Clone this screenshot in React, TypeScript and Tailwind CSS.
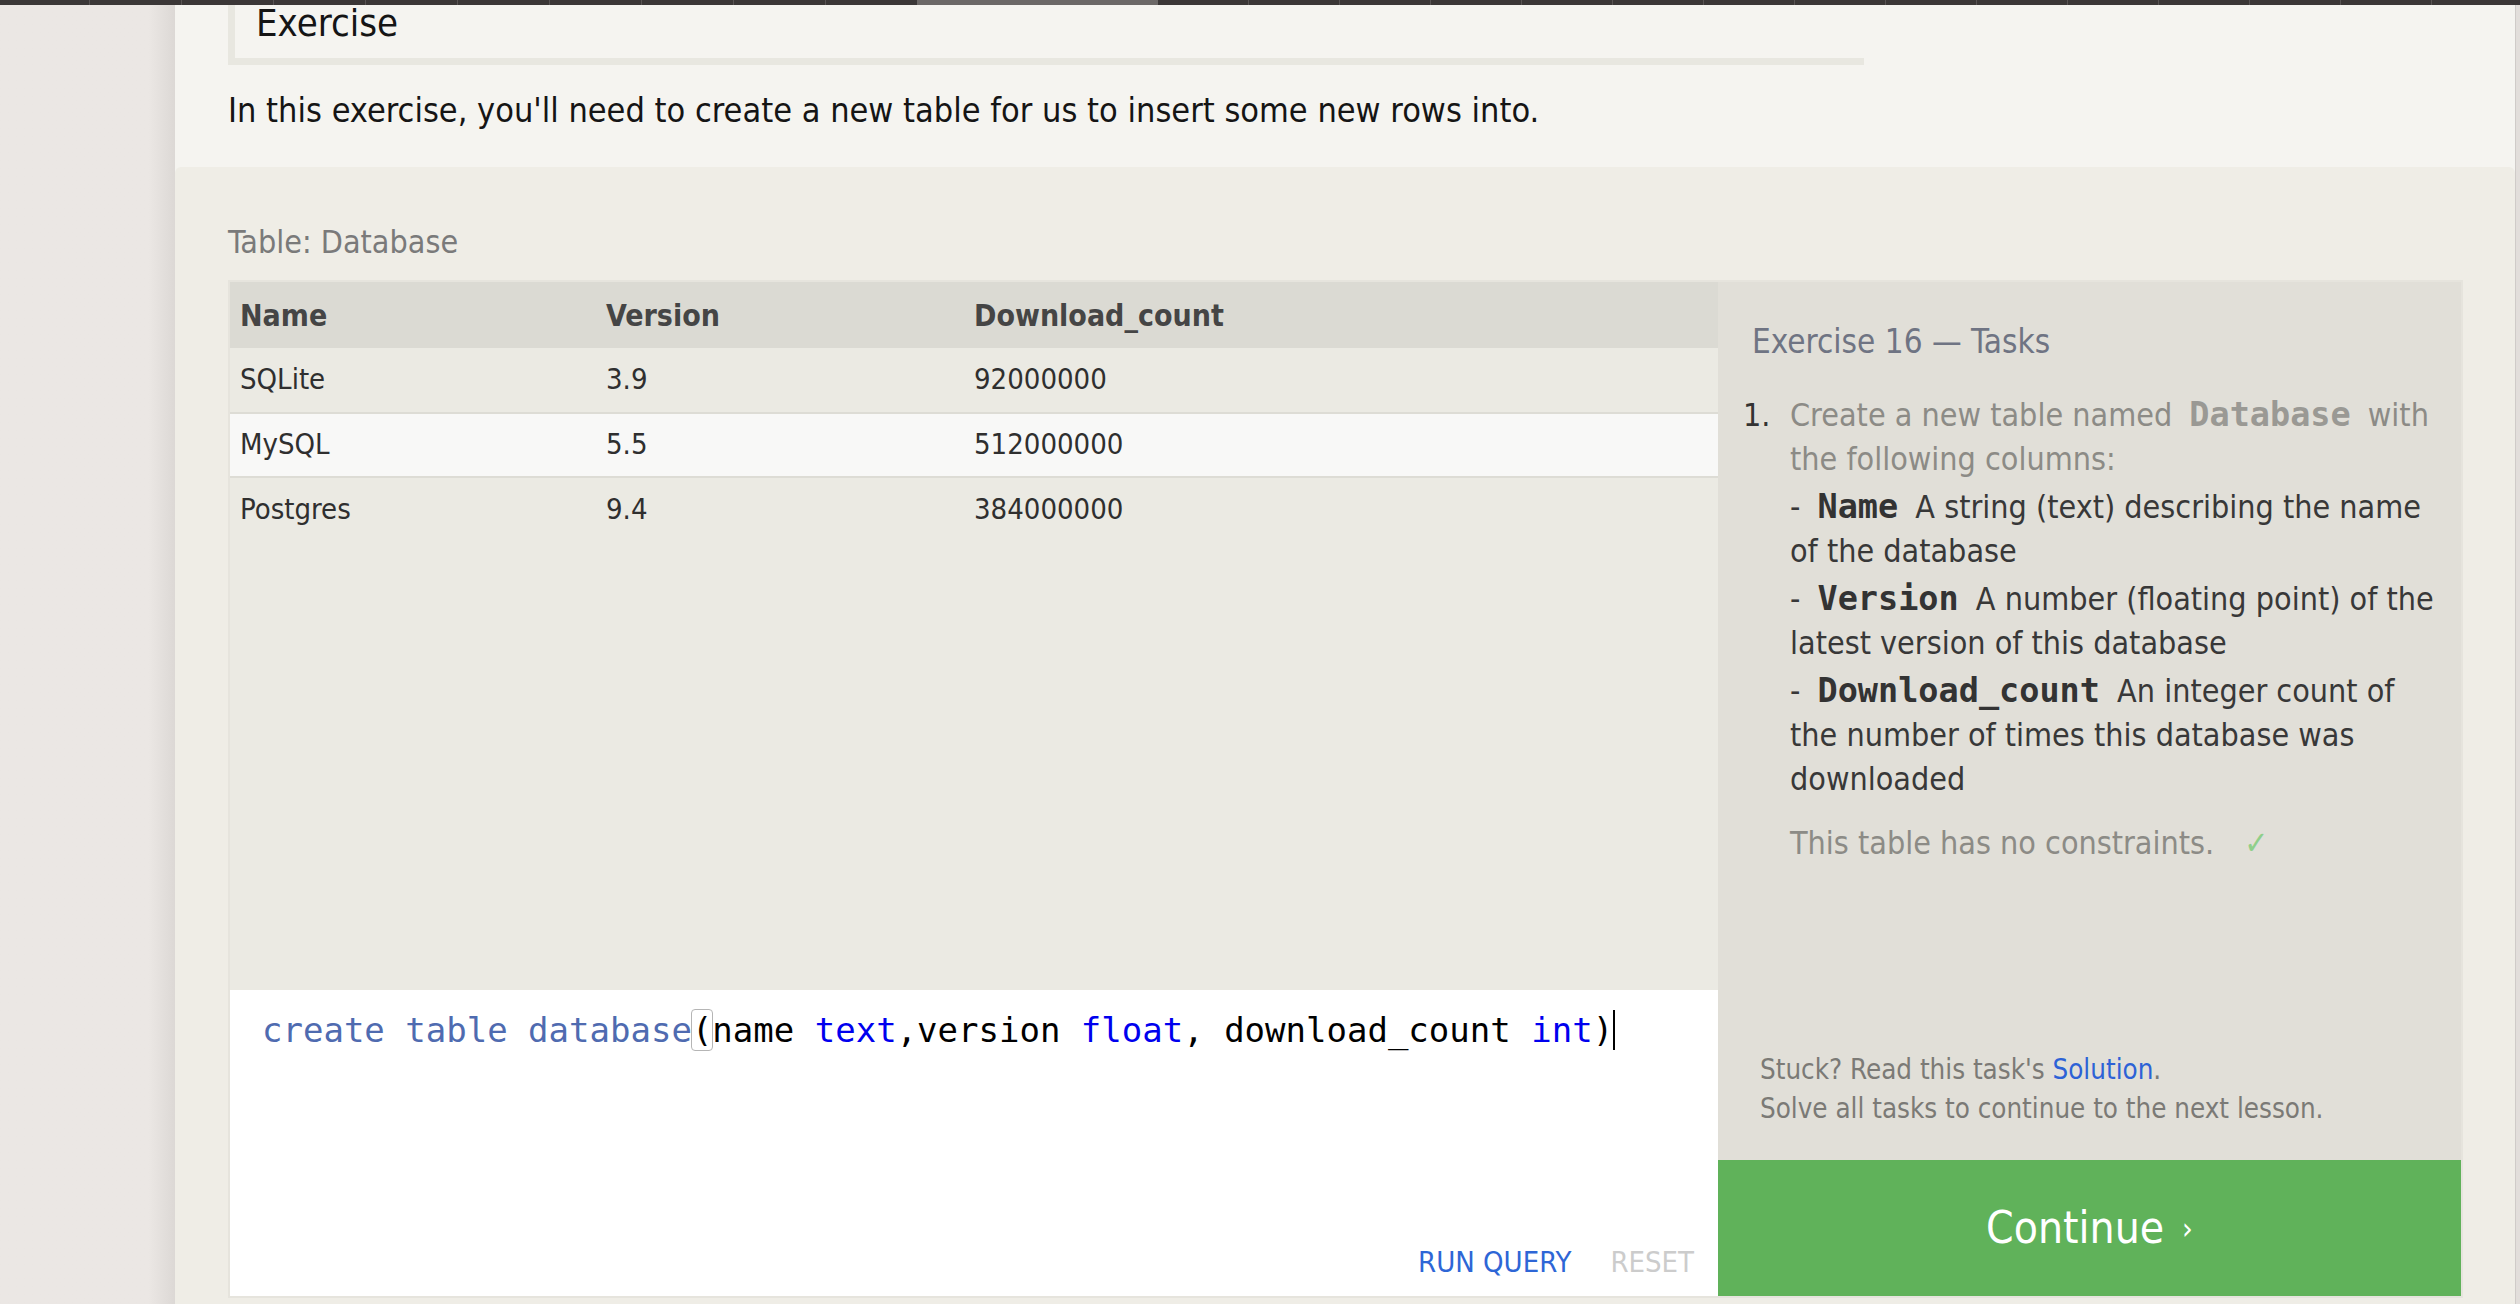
import React from 'react';

// sqlbolt-style exercise page (scrolled a bit down)

const sans = "font-['DejaVu_Sans_Condensed','Liberation_Sans',sans-serif]";
const mono = "font-['DejaVu_Sans_Mono','Liberation_Mono',monospace]";

const rows = [
  { name: 'SQLite', version: '3.9', count: '92000000', bg: 'bg-[#ebeae3]', h: 'h-[66px]' },
  { name: 'MySQL', version: '5.5', count: '512000000', bg: 'bg-[#f8f8f7]', h: 'h-[64px]' },
  { name: 'Postgres', version: '9.4', count: '384000000', bg: 'bg-[#ebeae3]', h: 'h-[64px]' },
];

const TabStrip = () => {
  const before = Array.from({ length: 9 });
  const after = Array.from({ length: 15 });
  return (
    <div className="h-[5px] shrink-0 flex bg-[#3b3737]">
      <div className="w-[89px] shrink-0" />
      {before.map((_, i) => (
        <div key={'b' + i} className="w-[92px] shrink-0 border-l border-[#595454]" />
      ))}
      <div className="w-[241px] shrink-0 bg-[#6c6867]" />
      {after.map((_, i) => (
        <div key={'a' + i} className="w-[91px] shrink-0 border-r border-[#595454]" />
      ))}
    </div>
  );
};

const Code = ({ children, muted }: { children: React.ReactNode; muted?: boolean }) => (
  <code
    className={`${mono} inline-block font-bold text-[33.5px] leading-[44px] pt-[4px] px-[8px] ${muted ? 'text-[#9a9994]' : 'text-[#333]'}`}
  >
    {children}
  </code>
);

const DataTable = () => (
  <div className="flex flex-col">
    <div className="h-[66px] grid grid-cols-[366px_368px_1fr] items-center bg-[#dbdad3] text-[30px] font-bold text-[#454545] pl-[10px]">
      <div>Name</div>
      <div>Version</div>
      <div>Download_count</div>
    </div>
    {rows.map((r, i) => (
      <div
        key={r.name}
        className={`${r.h} ${r.bg} grid grid-cols-[366px_368px_1fr] items-center pl-[10px] text-[29px] text-[#2f2f2f] ${i < 2 ? 'border-b-2 border-[#dddcd5]' : ''}`}
      >
        <div>{r.name}</div>
        <div>{r.version}</div>
        <div>{r.count}</div>
      </div>
    ))}
  </div>
);

const Editor = () => (
  <div className="h-[306px] shrink-0 bg-white flex flex-col">
    <div className={`${mono} text-[34px] leading-[40px] pl-[32px] pt-[20px] whitespace-pre text-black flex items-center`}>
      <span className="text-[#4f6bb0]">create table database</span>
      <span className="outline outline-1 outline-[#b5b5b5] rounded-[3px]">(</span>
      <span>name </span>
      <span className="text-[#0000ee]">text</span>
      <span>,version </span>
      <span className="text-[#0000ee]">float</span>
      <span>, download_count </span>
      <span className="text-[#0000ee]">int</span>
      <span>)</span>
      <span className="w-[2px] h-[40px] bg-black" />
    </div>
    <div className="mt-auto flex justify-end gap-[39px] pr-[24px] pb-[18px] text-[29px] leading-[32px]">
      <button className="text-[#2e66d6]">RUN QUERY</button>
      <button className="text-[#cccccc]">RESET</button>
    </div>
  </div>
);

const Tasks = () => (
  <div className="w-[743px] shrink-0 bg-[#e1dfd8] flex flex-col">
    <h2 className="pl-[34px] pt-[37px] text-[33px] leading-[46px] text-[#6f7483]">
      Exercise 16 — Tasks
    </h2>
    <ol className="mt-[24px] flex pl-[25px] text-[32px] leading-[44px]">
      <li className="flex items-baseline">
        <span className="w-[47px] shrink-0 text-[#333]">1.</span>
        <div className="w-[650px]">
          <span className="text-[#8c8b86]">
            Create a new table named <Code muted>Database</Code> with the following columns:
          </span>
          <br />
          <span className="text-[#383838]">
            - <Code>Name</Code> A string (text) describing the name of the database
            <br />- <Code>Version</Code> A number (floating point) of the latest version of this database
            <br />- <Code>Download_count</Code> An integer count of the number of times this database was downloaded
          </span>
          <p className="mt-[20px] text-[#8c8b86]">
            This table has no constraints.
            <span className="ml-[30px] text-[#8fcf8a]">✓</span>
          </p>
        </div>
      </li>
    </ol>
    <div className="mt-auto pl-[42px] pb-[32px] text-[27.5px] leading-[39px] text-[#7b7a76]">
      <p>
        Stuck? Read this task's <a className="text-[#2d62d6]">Solution</a>.
      </p>
      <p>Solve all tasks to continue to the next lesson.</p>
    </div>
    <button className="h-[136px] shrink-0 bg-[#60b25a] text-white text-[44px] flex items-center justify-center gap-[18px]">
      <span>Continue</span>
      <span className="text-[30px]">›</span>
    </button>
  </div>
);

export default function App() {
  return (
    <div className={`w-[2520px] h-[1304px] overflow-hidden flex flex-col bg-[#efede6] ${sans}`}>
      <TabStrip />
      <div className="flex flex-1 min-h-0">
        <aside className="w-[175px] shrink-0 bg-gradient-to-r from-[#ebe7e4] from-85% to-[#dcd8d5]" />
        <main className="w-[2340px] shrink-0 flex flex-col bg-[#f5f4f0]">
          <section className="h-[162px] shrink-0 pl-[53px]">
            <div className="w-[1636px] h-[60px] border-l-[7px] border-b-[7px] border-[#e8e7e0] pl-[21px]">
              <h1 className="text-[38px] leading-[36px] text-[#151515]">Exercise</h1>
            </div>
            <p className="mt-[22px] text-[34px] leading-[46px] text-[#151515]">
              In this exercise, you'll need to create a new table for us to insert some new rows into.
            </p>
          </section>
          <section className="flex-1 flex flex-col bg-[#efede6] rounded-t-[6px] pl-[53px] pr-[52px]">
            <div className="pt-[55px] text-[32px] leading-[40px] text-[#7a7a7a]">Table: Database</div>
            <div className="mt-[18px] h-[1018px] shrink-0 flex border-2 border-[#e6e4dd]">
              <div className="w-[1488px] shrink-0 flex flex-col">
                <DataTable />
                <div className="flex-1 bg-[#ebeae3]" />
                <Editor />
              </div>
              <Tasks />
            </div>
          </section>
        </main>
        <div className="w-[5px] shrink-0 border-l border-[#cfcbc8] bg-[#e2dedb]" />
      </div>
    </div>
  );
}
